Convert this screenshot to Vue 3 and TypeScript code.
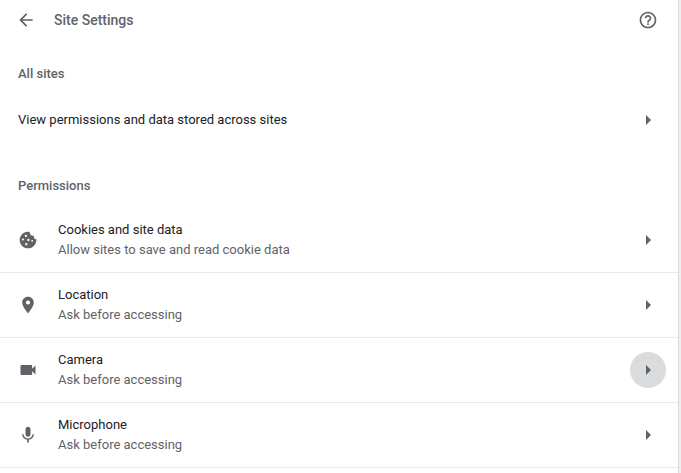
<script setup lang="ts">
interface Row { title: string; sub: string; icon: string; active?: boolean }
const rows: Row[] = [
  { title: 'Cookies and site data', sub: 'Allow sites to save and read cookie data', icon: 'cookie' },
  { title: 'Location', sub: 'Ask before accessing', icon: 'location' },
  { title: 'Camera', sub: 'Ask before accessing', icon: 'camera', active: true },
  { title: 'Microphone', sub: 'Ask before accessing', icon: 'mic' },
]
</script>

<template>
  <div class="page">
    <header class="head">
      <svg class="back" width="20" height="20" viewBox="0 0 24 24"><path d="M20 11H7.83l5.59-5.59L12 4l-8 8 8 8 1.41-1.41L7.83 13H20v-2z"/></svg>
      <h1 class="title">Site Settings</h1>
      <svg class="help" width="20" height="20" viewBox="0 0 24 24"><path d="M11 18h2v-2h-2v2zm1-16C6.48 2 2 6.48 2 12s4.48 10 10 10 10-4.48 10-10S17.52 2 12 2zm0 18c-4.41 0-8-3.59-8-8s3.59-8 8-8 8 3.59 8 8-3.59 8-8 8zm0-14c-2.21 0-4 1.79-4 4h2c0-1.1.9-2 2-2s2 .9 2 2c0 2-3 1.75-3 5h2c0-2.25 3-2.5 3-5 0-2.21-1.79-4-4-4z"/></svg>
    </header>

    <h2 class="section first">All sites</h2>
    <div class="all-row">
      <span class="primary">View permissions and data stored across sites</span>
      <span class="arrow"><i class="tri"></i></span>
    </div>

    <h2 class="section second">Permissions</h2>
    <div class="list">
      <div v-for="r in rows" :key="r.title" class="row">
        <span class="icon">
          <svg width="20" height="20" viewBox="0 0 24 24">
            <path v-if="r.icon === 'cookie'" fill-rule="evenodd" d="M21.95 10.99c-1.79-.03-3.7-1.95-2.68-4.22-2.97 1-5.78-1.59-5.19-4.56C7.11.74 2 6.41 2 12c0 5.52 4.48 10 10 10 5.89 0 10.54-5.08 9.95-11.01zM8.1 7a1.4 1.4 0 1 0 2.8 0 1.4 1.4 0 1 0-2.8 0zM4.8 11.5a1.2 1.2 0 1 0 2.4 0 1.2 1.2 0 1 0-2.4 0zM11.1 12a1.4 1.4 0 1 0 2.8 0 1.4 1.4 0 1 0-2.8 0zM15.9 13a1.1 1.1 0 1 0 2.2 0 1.1 1.1 0 1 0-2.2 0zM8.6 17a1.4 1.4 0 1 0 2.8 0 1.4 1.4 0 1 0-2.8 0z"/>
            <path v-else-if="r.icon === 'location'" d="M12 2C8.13 2 5 5.13 5 9c0 5.25 7 13 7 13s7-7.75 7-13c0-3.87-3.13-7-7-7zm0 9.5a2.5 2.5 0 0 1 0-5 2.5 2.5 0 0 1 0 5z"/>
            <path v-else-if="r.icon === 'camera'" d="M17 10.5V7c0-.55-.45-1-1-1H4c-.55 0-1 .45-1 1v10c0 .55.45 1 1 1h12c.55 0 1-.45 1-1v-3.5l4 4v-11l-4 4z"/>
            <path v-else d="M12 14c1.66 0 2.99-1.34 2.99-3L15 5c0-1.66-1.34-3-3-3S9 3.34 9 5v6c0 1.66 1.34 3 3 3zm5.3-3c0 3-2.54 5.1-5.3 5.1S6.7 14 6.7 11H5c0 3.41 2.72 6.23 6 6.72V21h2v-3.28c3.28-.48 6-3.3 6-6.72h-1.7z"/>
          </svg>
        </span>
        <div class="text">
          <div class="primary">{{ r.title }}</div>
          <div class="secondary">{{ r.sub }}</div>
        </div>
        <span class="arrow" :class="{ active: r.active }"><i class="tri"></i></span>
      </div>
    </div>
  </div>
</template>

<style scoped>
.page {
  box-sizing: border-box;
  width: 679px;
  height: 473px;
  overflow: hidden;
  background: #fff;
  border-right: 1px solid #dcdcdc;
  box-shadow: 2px 0 0 #efefef;
  font-family: Roboto, "Liberation Sans", sans-serif;
  font-size: 13px;
  color: #5f6368;
}
.head {
  display: flex;
  align-items: center;
  height: 40px;
  padding: 0 20px 0 16px;
}
.back, .help, .icon svg { fill: #5f6368; display: block; }
.title {
  flex: 1;
  margin: 0 0 0 18px;
  font-size: 14px;
  font-weight: 500;
  color: #5f6368;
}
.section {
  margin: 0;
  padding-left: 18px;
  font-size: 13px;
  font-weight: 500;
  line-height: 18px;
  color: #5f6368;
}
.first { padding-top: 25px; }
.second { padding-top: 20px; }
.all-row {
  display: flex;
  align-items: center;
  justify-content: space-between;
  height: 74px;
  padding: 0 12px 0 18px;
}
.primary { color: #202124; line-height: 20px; }
.secondary { color: #5f6368; line-height: 20px; }
.list { padding-top: 13px; }
.row {
  display: flex;
  align-items: center;
  box-sizing: border-box;
  height: 65px;
  padding: 0 12px 0 18px;
  border-bottom: 1px solid #e9eaeb;
}
.icon { width: 40px; flex: none; }
.text { flex: 1; }
.arrow {
  flex: none;
  display: flex;
  align-items: center;
  justify-content: center;
  width: 36px;
  height: 36px;
  border-radius: 50%;
}
.arrow.active { background: #dadcde; }
.tri {
  display: block;
  width: 0;
  height: 0;
  border-style: solid;
  border-width: 5px 0 5px 5px;
  border-color: transparent transparent transparent #5f6368;
}
</style>
